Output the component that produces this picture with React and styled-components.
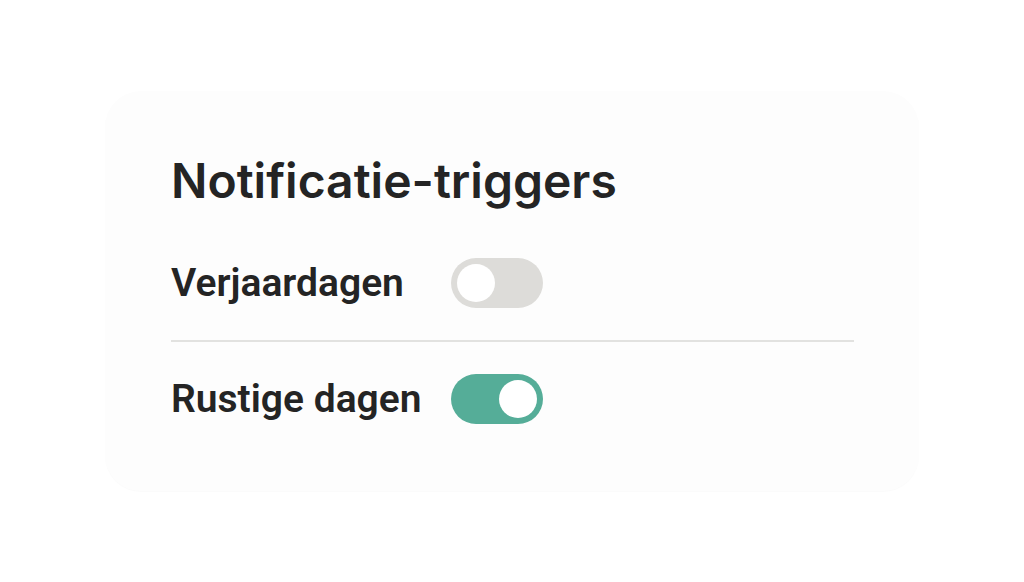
import React, { useState } from "react";
import styled, { createGlobalStyle } from "styled-components";

const Global = createGlobalStyle`
  html, body { margin: 0; padding: 0; background: #ffffff; }
  #root { min-height: 100vh; }
`;

const Page = styled.div`
  min-height: 100vh;
  display: flex;
  align-items: center;
  justify-content: center;
`;

const Card = styled.section`
  box-sizing: border-box;
  width: 814px;
  height: 400px;
  padding: 61px 65px 34px 66px;
  background: #fdfdfd;
  border-radius: 36px;
  box-shadow: 0 1px 1px rgba(0, 0, 0, 0.02);
  display: flex;
  flex-direction: column;
`;

const Title = styled.h2`
  margin: 0 0 16px;
  font-family: Inter, "Noto Sans", sans-serif;
  font-weight: 600;
  font-size: 48px;
  line-height: 58px;
  color: #242424;
  letter-spacing: 0;
`;

const Row = styled.div`
  display: grid;
  grid-template-columns: 280px auto;
  align-items: center;
  padding: 32px 0;
  border-top: ${(p) => (p.$divider ? "2px solid #e2e2e0" : "none")};
`;

const Label = styled.span`
  font-family: Roboto, "Liberation Sans", sans-serif;
  font-weight: 600;
  font-size: 39px;
  line-height: 50px;
  color: #242424;
`;

const Track = styled.button`
  position: relative;
  width: 92px;
  height: 50px;
  border: none;
  padding: 0;
  border-radius: 25px;
  cursor: pointer;
  background: ${(p) => (p.$on ? "#55ad98" : "#dddcd9")};
`;

const Knob = styled.span`
  position: absolute;
  top: 6px;
  left: ${(p) => (p.$on ? "48px" : "6px")};
  width: 38px;
  height: 38px;
  border-radius: 50%;
  background: #ffffff;
`;

function Toggle({ on, onClick }) {
  return (
    <Track $on={on} onClick={onClick} aria-pressed={on}>
      <Knob $on={on} />
    </Track>
  );
}

export default function App() {
  const [birthdays, setBirthdays] = useState(false);
  const [quiet, setQuiet] = useState(true);
  return (
    <>
      <Global />
      <Page>
        <Card>
          <Title>Notificatie-triggers</Title>
          <Row>
            <Label>Verjaardagen</Label>
            <Toggle on={birthdays} onClick={() => setBirthdays(!birthdays)} />
          </Row>
          <Row $divider>
            <Label>Rustige dagen</Label>
            <Toggle on={quiet} onClick={() => setQuiet(!quiet)} />
          </Row>
        </Card>
      </Page>
    </>
  );
}
